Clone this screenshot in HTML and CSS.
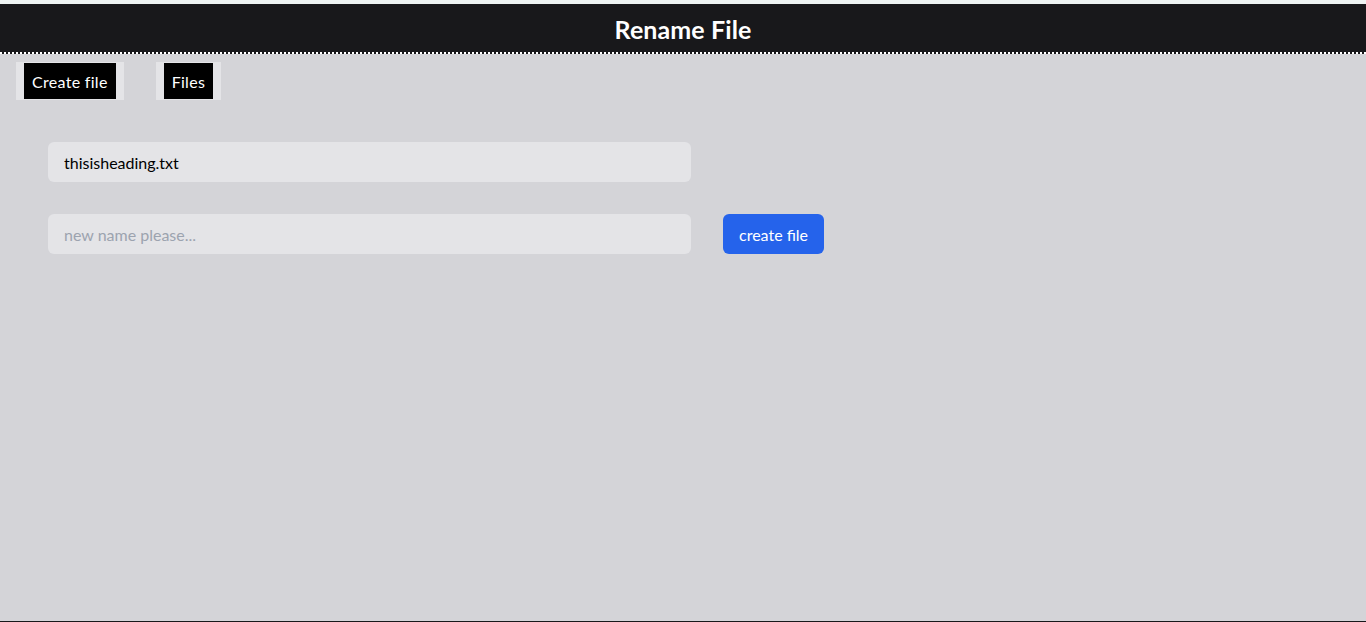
FILE: index.html
```html
<!DOCTYPE html>
<html>
<head>
<meta charset="utf-8">
<link rel="stylesheet" href="styles.css">
</head>
<body>
<div class="page">
  <header class="topbar"><h1 class="title">Rename File</h1></header>
  <nav class="nav">
    <a class="nav-item"><span class="nav-label">Create file</span></a>
    <a class="nav-item"><span class="nav-label">Files</span></a>
  </nav>
  <main class="content">
    <div class="row"><input class="field" type="text" value="thisisheading.txt"></div>
    <div class="row">
      <input class="field" type="text" placeholder="new name please...">
      <button class="btn">create file</button>
    </div>
  </main>
</div>
</body>
</html>
```
FILE: styles.css
```css
html, body { margin: 0; padding: 0; }
body {
  background: #eef3f3;
  font-family: Lato, "Noto Sans", sans-serif;
  font-size: 16px;
  height: 622px;
  overflow: hidden;
}
.page {
  margin-top: 4px;
  height: 617px;
  background: #d4d4d8;
  border-bottom: 1px solid #18181b;
  display: flex;
  flex-direction: column;
}
.topbar {
  background: #18181b;
  height: 46px;
  padding-top: 2px;
  border-bottom: 2px dotted #ffffff;
  display: flex;
  align-items: center;
  justify-content: center;
  flex-shrink: 0;
}
.title {
  margin: 0;
  color: #ffffff;
  font-size: 25px;
  font-weight: 700;
  letter-spacing: 0.1px;
}
.nav {
  display: flex;
  gap: 32px;
  padding: 8px 16px 0;
}
.nav-item {
  display: flex;
  background: #e4e4e7;
  padding: 1px 8px;
  height: 36px;
}
.nav-label {
  background: #000000;
  color: #ffffff;
  padding: 0 8px;
  display: flex;
  align-items: center;
  letter-spacing: 0.3px;
}
.content {
  display: flex;
  flex-direction: column;
  gap: 32px;
  padding: 42px 48px 0;
}
.row {
  display: flex;
  gap: 32px;
}
.field {
  width: 643px;
  height: 40px;
  box-sizing: border-box;
  border: none;
  border-radius: 6px;
  background: #e4e4e7;
  padding: 0 16px;
  font-family: inherit;
  font-size: 16px;
  color: #000000;
  outline: none;
  line-height: 38px;
}
.field::placeholder { color: #9ca3af; }
.btn {
  height: 40px;
  padding: 0 16px;
  border: none;
  border-radius: 6px;
  background: #2563eb;
  color: #ffffff;
  font-family: inherit;
  font-size: 16px;
}
```
